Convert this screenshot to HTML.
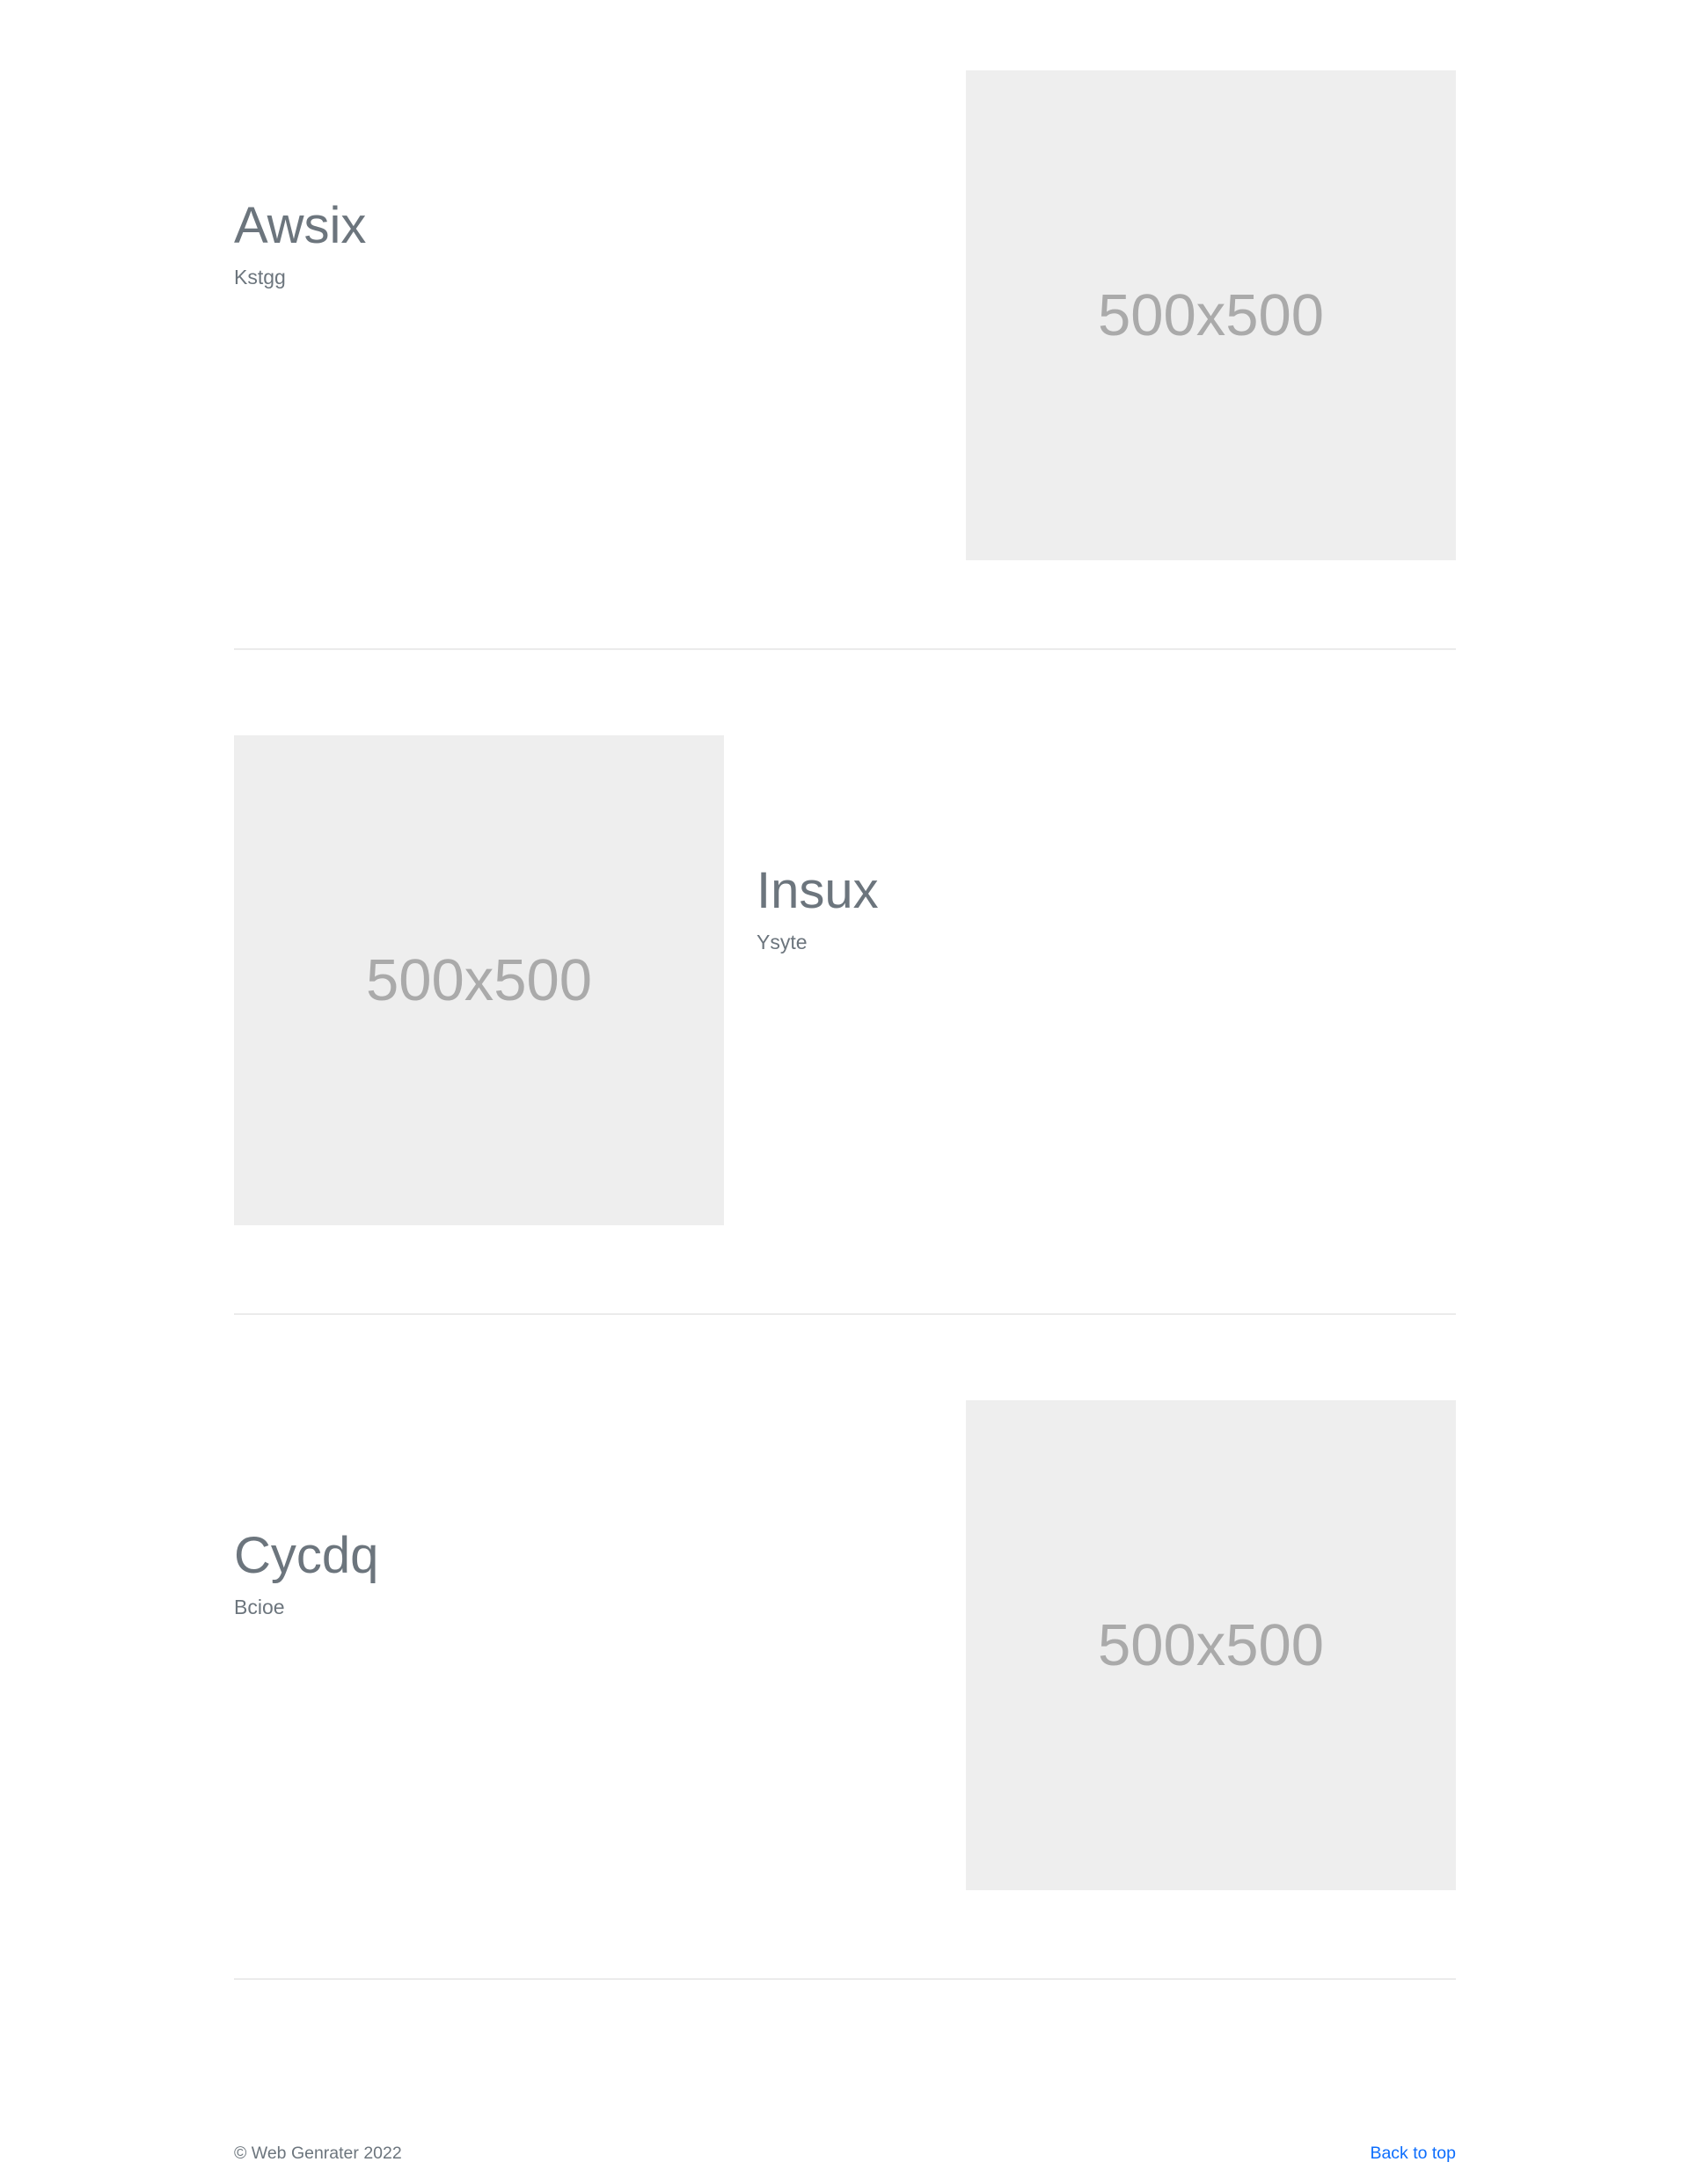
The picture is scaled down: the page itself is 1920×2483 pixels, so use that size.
<!DOCTYPE html>
<html><head><meta charset="utf-8"><style>
html,body{margin:0;padding:0;background:#fff;}
body{width:1920px;height:2483px;position:relative;font-family:"Liberation Sans",sans-serif;overflow:hidden;}
.box{position:absolute;width:557px;height:557px;background:#eeeeee;color:#aaaaaa;font-size:67px;display:flex;align-items:center;justify-content:center;}
.h{position:absolute;font-size:58px;line-height:1;color:#6c757d;margin:0;font-weight:normal;}
.s{position:absolute;font-size:23px;line-height:1;color:#6c757d;}
.hr{position:absolute;left:266px;width:1389px;height:2px;background:#ebebeb;}
.f{position:absolute;font-size:19.5px;line-height:1;top:2439px;}
</style></head><body>
<div class="h" style="left:266px;top:228px">Awsix</div>
<div class="s" style="left:266px;top:304px">Kstgg</div>
<div class="box" style="left:1098px;top:80px">500x500</div>
<div class="hr" style="top:737px"></div>

<div class="box" style="left:266px;top:836px">500x500</div>
<div class="h" style="left:860px;top:984px">Insux</div>
<div class="s" style="left:860px;top:1060px">Ysyte</div>
<div class="hr" style="top:1493px"></div>

<div class="h" style="left:266px;top:1740px">Cycdq</div>
<div class="s" style="left:266px;top:1816px">Bcioe</div>
<div class="box" style="left:1098px;top:1592px">500x500</div>
<div class="hr" style="top:2249px"></div>

<div class="f" style="left:266px;color:#6c757d">© Web Genrater 2022</div>
<a class="f" style="right:265px;color:#0d6efd;text-decoration:none" href="#">Back to top</a>
</body></html>
